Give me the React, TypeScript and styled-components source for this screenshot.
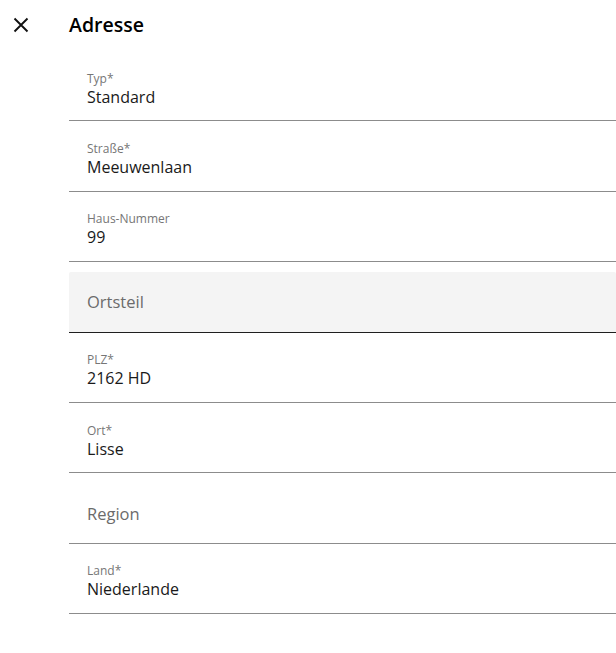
import React from 'react'
import styled, { createGlobalStyle, css } from 'styled-components'

const Colors = {
  text: '#1a1a1a',
  label: '#767676',
  placeholder: '#6b6b6b',
  line: '#8c8c8c',
  focusLine: '#1f1f1f',
  focusBg: '#f4f4f4'
}

const FontFamily = `'Open Sans', 'Noto Sans', Arial, sans-serif`

const GlobalStyle = createGlobalStyle`
  html, body {
    margin: 0;
    padding: 0;
    background: #ffffff;
  }
  body {
    font-family: ${FontFamily};
    color: ${Colors.text};
  }
`

const Page = styled.div`
  display: grid;
  grid-template-columns: 69px 1fr;
  width: 616px;
`

const CloseButton = styled.button`
  display: flex;
  align-items: center;
  justify-content: center;
  width: 42px;
  height: 49px;
  padding: 0;
  border: none;
  background: none;
  color: #111;
  cursor: pointer;
`

const Header = styled.div`
  height: 51px;
  padding-bottom: 2px;
  box-sizing: border-box;
  display: flex;
  align-items: center;
`

const Title = styled.h1`
  margin: 0;
  font-size: 19.5px;
  font-weight: 600;
  line-height: 1;
  color: #000;
`

const Form = styled.div`
  grid-column: 2;
  display: flex;
  flex-direction: column;
`

const Field = styled.div<{ focused?: boolean }>`
  box-sizing: border-box;
  height: 60.4px;
  margin-top: 10px;
  padding: 0 18px;
  display: flex;
  flex-direction: column;
  justify-content: center;
  border-bottom: 1px solid ${Colors.line};
  ${(props) =>
    props.focused
      ? css`
          background: ${Colors.focusBg};
          border-bottom-color: ${Colors.focusLine};
          border-radius: 2px 2px 0 0;
        `
      : null}
`

const Label = styled.span`
  font-size: 12px;
  line-height: 16px;
  color: ${Colors.label};
  margin-top: -3px;
`

const Value = styled.span`
  font-size: 16px;
  line-height: 21px;
  color: ${Colors.text};
`

const Placeholder = styled.span`
  font-size: 16.5px;
  line-height: 22px;
  color: ${Colors.placeholder};
  margin-top: 1px;
`

const CloseIcon = () => (
  <svg width='16' height='16' viewBox='0 0 16 16'>
    <path
      d='M1.5 1.5l13 13M14.5 1.5l-13 13'
      stroke='currentColor'
      strokeWidth='1.9'
      fill='none'
    />
  </svg>
)

const fields = [
  { label: 'Typ*', value: 'Standard' },
  { label: 'Straße*', value: 'Meeuwenlaan' },
  { label: 'Haus-Nummer', value: '99' },
  { label: 'Ortsteil', focused: true },
  { label: 'PLZ*', value: '2162 HD' },
  { label: 'Ort*', value: 'Lisse' },
  { label: 'Region' },
  { label: 'Land*', value: 'Niederlande' }
]

export default function App() {
  return (
    <>
      <GlobalStyle />
      <Page>
        <CloseButton aria-label='Schließen'>
          <CloseIcon />
        </CloseButton>
        <Header>
          <Title>Adresse</Title>
        </Header>
        <Form>
          {fields.map((f) => (
            <Field key={f.label} focused={f.focused}>
              {f.value ? (
                <>
                  <Label>{f.label}</Label>
                  <Value>{f.value}</Value>
                </>
              ) : (
                <Placeholder>{f.label}</Placeholder>
              )}
            </Field>
          ))}
        </Form>
      </Page>
    </>
  )
}
